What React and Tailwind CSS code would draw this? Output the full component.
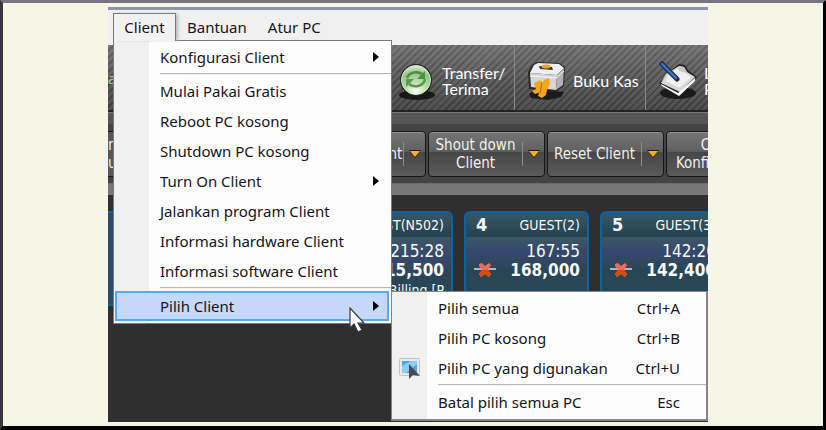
import React from "react";

const menuFont = "font-['Noto_Sans','Open_Sans',sans-serif]";

function TransferIcon() {
  return (
    <svg viewBox="0 0 40 40" className="h-10 w-10 shrink-0" aria-hidden="true">
      <defs>
        <radialGradient id="orb" cx="50%" cy="90%" r="90%">
          <stop offset="0" stopColor="#ffffff" />
          <stop offset="0.3" stopColor="#c8e6b6" />
          <stop offset="0.75" stopColor="#8fc47c" />
          <stop offset="1" stopColor="#e4f2dc" />
        </radialGradient>
      </defs>
      <ellipse cx="21" cy="34" rx="18" ry="5" fill="#181818" />
      <circle cx="20" cy="19" r="16" fill="#252525" />
      <circle cx="20" cy="19" r="14.500" fill="url(#orb)" stroke="#d5ead0" strokeWidth="1" />
      <path d="M11 17a9.500 8 0 0 1 15-4" fill="none" stroke="#4f8c49" strokeWidth="2.500" />
      <path d="M29 10v8h-8z" fill="#4f8c49" />
      <path d="M29 18a9.500 8 0 0 1-16 5" fill="none" stroke="#5b9852" strokeWidth="2.500" />
      <path d="M10 26v-8h8z" fill="#5b9852" />
    </svg>
  );
}

function CashIcon() {
  return (
    <svg viewBox="0 0 40 40" className="h-10 w-10 shrink-0" aria-hidden="true">
      <path d="M2 33l7-5 28 3-3 5-13 3-17-2z" fill="#1b1b1b" />
      <path d="M5 4l5-3 22 1 6 4-1 19-8 6-27-3-1-17z" fill="#292929" />
      <path d="M7 4l4-2 21 1 5 4-7 7-27-2z" fill="#efefef" />
      <path d="M3 12l27 2-1 15-25-3z" fill="#d6d6d6" />
      <path d="M30 14l7-7-1 17-7 5z" fill="#b2b2b2" />
      <path d="M3 15l26 2 8-7" fill="none" stroke="#f7f7f7" strokeWidth="1" />
      <path d="M12 5l13 1 1 3-13-1z" fill="#343434" />
      <ellipse cx="19" cy="5.500" rx="4.500" ry="2" fill="#eda322" />
      <path d="M7 22l6-3 3 3-2 9-6 2-3-3 4-2z" fill="#f2a51d" />
      <path d="M15 23l2-4 5-2 1 6-3 6-1 5-4 3-4-2 1-3 2-3z" fill="#f2a51d" />
      <path d="M15 21l-2 11" stroke="#b66d08" strokeWidth="1" />
    </svg>
  );
}

function NotesIcon() {
  return (
    <svg viewBox="0 0 40 40" className="h-10 w-10 shrink-0" aria-hidden="true">
      <ellipse cx="20" cy="32" rx="18" ry="6" fill="#1a1a1a" />
      <path d="M1 22L13 9l8-6 6 1 3 5 9 7-17 20z" fill="#272727" />
      <path d="M8 13l13-8 5 1 3 5 8 5-15 15L3 22z" fill="#d6d6d6" />
      <path d="M3 23l17 9 17-15v3L21 35 4 25z" fill="#f9f9f9" />
      <path d="M10 14l9-6 6 3 9 5-13 11L8 20z" fill="#f0f0f0" />
      <path d="M21 5l5 1 3 6-8-2z" fill="#c8c8c8" />
      <path d="M4 3l15 15" stroke="#15274e" strokeWidth="5" strokeLinecap="round" />
      <path d="M4 3l14 14" stroke="#3f70bd" strokeWidth="2.500" strokeLinecap="round" />
    </svg>
  );
}

function Disconnected() {
  return (
    <svg viewBox="0 0 22 16" className="h-4 w-[22px] shrink-0" aria-hidden="true">
      <path d="M0 7h22" stroke="#aeb7c1" strokeWidth="2" />
      <path d="M5 2l3-1 3 3 4-3 2 2-3 5 3 4-2 3-4-3-4 3-2-3 3-4-3-4z" fill="#f0675c" />
      <path d="M14 8l3 4-2 3-4-3-4 3-2-3 3-4z" fill="#d64d13" />
    </svg>
  );
}

const tools = [
  { label: "Transfer/\nTerima", Icon: TransferIcon },
  { label: "Buku Kas", Icon: CashIcon },
  { label: "Laporan\nPC", Icon: NotesIcon },
];

function Toolbar() {
  return (
    <div className="flex h-[67px] overflow-hidden border-b-2 border-[#232323] bg-[linear-gradient(180deg,#ffffff24,#00000008_60%,#00000030),repeating-linear-gradient(135deg,#626262_0px,#626262_3px,#4c4c4c_3px,#4c4c4c_5px)]">
      <span className="w-[276px] shrink-0 pt-6 text-sm text-[#9bd17a]">a</span>
      {tools.map(({ label, Icon }) => (
        <button
          key={label}
          className="flex w-[131px] shrink-0 items-center gap-[6px] border-r border-[#8a8a8a] pt-[10px] pb-1 pl-3 text-left font-['Lato',sans-serif] text-base leading-4 whitespace-pre text-white"
        >
          <Icon />
          {label}
        </button>
      ))}
    </div>
  );
}

function ActionButton({ label }) {
  return (
    <button className="flex h-[46px] w-[117px] shrink-0 items-center rounded-[4px] border border-[#161616] bg-[linear-gradient(180deg,#757575_0%,#606060_44%,#474747_46%,#5a5a5a_100%)] text-[15px] leading-[18px] text-[#f0f0f0] shadow-[inset_0_1px_0_#949494]">
      <span className="flex flex-1 justify-center text-center whitespace-pre">{label}</span>
      <span className="flex h-6 w-[22px] shrink-0 items-center justify-center border-l border-[#8c8c8c]">
        <svg viewBox="0 0 12 8" className="h-2 w-3" aria-hidden="true">
          <path d="M0 0h12L6 8z" fill="#201a10" />
          <path d="M1 1h10L6 7z" fill="#ffad25" />
        </svg>
      </span>
    </button>
  );
}

function ActionBar() {
  return (
    <div className="bg-[#444444] font-['DejaVu_Sans_Condensed','DejaVu_Sans',sans-serif]">
      <div className="h-3 border-t border-[#777777] bg-[#565656]" />
      <div className="flex gap-[2px] overflow-hidden pt-[7px] pb-[6px]">
        <span className="h-[46px] w-[199px] shrink-0 overflow-hidden border-y border-[#161616] bg-[#585858] pt-1 text-[15px] leading-[18px] text-[#f0f0f0]">
          n<br />u
        </span>
        <ActionButton label="Restart Client" />
        <ActionButton label={"Shout down\nClient"} />
        <ActionButton label="Reset Client" />
        <ActionButton label={"Cek\nKonfigurasi"} />
      </div>
      <div className="h-3 border-t border-[#696881] bg-[#777777]" />
    </div>
  );
}

function Card({ number, guest, time, amount, note }) {
  return (
    <article className="h-[95px] w-[125px] shrink-0 overflow-hidden rounded-[6px] border-2 border-[#0d62a0] bg-[#284656] font-['DejaVu_Sans_Condensed','DejaVu_Sans',sans-serif] text-[#f5f8fa]">
      <header className="flex h-6 items-center justify-between bg-[linear-gradient(180deg,#385765,#244150)] pr-[7px] pl-[10px]">
        <b className="text-lg">{number}</b>
        <span className="text-sm">{guest}</span>
      </header>
      <div className="bg-[linear-gradient(180deg,#3a5866_0%,#36486a_30%,#36486a_38%,#284656_70%)] pt-1 pr-[7px] pl-2">
        <p className="text-right text-[17px] leading-5">{time}</p>
        <p className="flex items-center justify-between leading-[18px]">
          <Disconnected />
          <b className="text-[17px]">{amount}</b>
        </p>
        <p className="pt-1 text-right text-sm leading-[14px]">{note}</p>
      </div>
    </article>
  );
}

function Separator() {
  return <div role="separator" className="my-[1px] ml-[46px] h-[2px] border-t border-[#b8b8b8] bg-[#f1f1f1]" />;
}

function Arrow() {
  return (
    <svg viewBox="0 0 6 10" className="h-[10px] w-[6px]" aria-hidden="true">
      <path d="M0 0l6 5-6 5z" fill="#000" />
    </svg>
  );
}

function MenuItem({ label, submenu, active }) {
  return (
    <button
      role="menuitem"
      className={
        active
          ? "mt-px mr-[2px] ml-px flex h-[30px] items-center justify-between border-2 border-[#58aaf4] bg-[#c6d8f7] pr-2 pl-[43px]"
          : "flex h-[30px] items-center justify-between pr-3 pl-[46px]"
      }
    >
      {label}
      {submenu && <Arrow />}
    </button>
  );
}

function ClientMenu() {
  return (
    <div
      role="menu"
      className="absolute top-[33px] left-[5px] flex w-[279px] flex-col border border-[#77777d] bg-[linear-gradient(90deg,#f0f0f0_35px,#fdfdfd_35px)] pt-px pb-[2px] text-[15px] text-[#15151c]"
    >
      <MenuItem label="Konfigurasi Client" submenu />
      <Separator />
      <MenuItem label="Mulai Pakai Gratis" />
      <MenuItem label="Reboot PC kosong" />
      <MenuItem label="Shutdown PC kosong" />
      <MenuItem label="Turn On Client" submenu />
      <MenuItem label="Jalankan program Client" />
      <MenuItem label="Informasi hardware Client" />
      <MenuItem label="Informasi software Client" />
      <Separator />
      <MenuItem label="Pilih Client" submenu active />
    </div>
  );
}

function ShortcutItem({ label, keys, icon }) {
  return (
    <button role="menuitem" className="flex h-[30px] items-center pr-[26px]">
      <span className="flex w-[46px] shrink-0 pl-[7px]">
        {icon && (
          <svg viewBox="0 0 22 22" className="h-[22px] w-[22px]" aria-hidden="true">
            <rect x="0.500" y="1.500" width="20" height="17" rx="1" fill="#e8e8e6" stroke="#c4c4c4" />
            <rect x="3" y="4" width="15" height="12" fill="#4fa5ec" />
            <path d="M3 16V9l9-5h6v3L7 16z" fill="#8ecbf8" />
            <path d="M10 7v15l4-4 7 1z" fill="#444b52" />
          </svg>
        )}
      </span>
      <span>{label}</span>
      <span className="ml-auto">{keys}</span>
    </button>
  );
}

function SelectMenu() {
  return (
    <div
      role="menu"
      className="absolute top-[284px] right-0 left-[283px] flex flex-col border border-r-2 border-b-2 border-[#858585] bg-[linear-gradient(90deg,#f0f0f0_35px,#fdfdfd_35px)] pt-px pb-[2px] text-[15px] text-[#15151c]"
    >
      <ShortcutItem label="Pilih semua" keys="Ctrl+A" />
      <ShortcutItem label="Pilih PC kosong" keys="Ctrl+B" />
      <ShortcutItem label="Pilih PC yang digunakan" keys="Ctrl+U" icon />
      <Separator />
      <ShortcutItem label="Batal pilih semua PC" keys="Esc" />
    </div>
  );
}

export default function App() {
  return (
    <main className="flex min-h-screen border-t-[3px] border-r-[3px] border-b-4 border-l-[3px] border-t-[#77747f] border-r-black border-b-black border-l-[#39373b] bg-[#f7f5e6] pt-1 pr-[115px] pb-1 pl-[105px]">
      <section className={`relative flex min-w-0 flex-1 flex-col bg-[#2f2f2f] ${menuFont}`}>
        <nav className="flex h-[38px] shrink-0 border-t-[3px] border-[#8798ac] bg-[#f0f0f0] pt-[3px] pl-[5px] text-[15px] text-[#15151c]">
          <button className="relative z-10 h-7 w-[63px] border border-b-0 border-[#77777d] bg-[#f1f1f1] shadow-[3px_0_3px_-1px_#bbb]">
            Client
          </button>
          <button className="h-7 px-[11px]">Bantuan</button>
          <button className="h-7 px-[10px]">Atur PC</button>
        </nav>
        <Toolbar />
        <ActionBar />
        <div className="flex flex-1 gap-[11px] overflow-hidden pt-4">
          <div className="h-[95px] w-[209px] shrink-0 border-y-2 border-[#0d62a0] bg-[#284c6a]" />
          <Card number="3" guest="GUEST(N502)" time="215:28" amount="215,500" note="Billing [P" />
          <Card number="4" guest="GUEST(2)" time="167:55" amount="168,000" />
          <Card number="5" guest="GUEST(3)" time="142:20" amount="142,400" />
        </div>
        <ClientMenu />
        <SelectMenu />
        <svg viewBox="0 0 17 26" className="absolute top-[300px] left-[241px] h-[26px] w-[17px]" aria-hidden="true">
          <path d="M1 1v20l4-4 4 8 4-2-4-7h6z" fill="#fff" stroke="#333946" strokeWidth="1.200" />
        </svg>
      </section>
    </main>
  );
}
